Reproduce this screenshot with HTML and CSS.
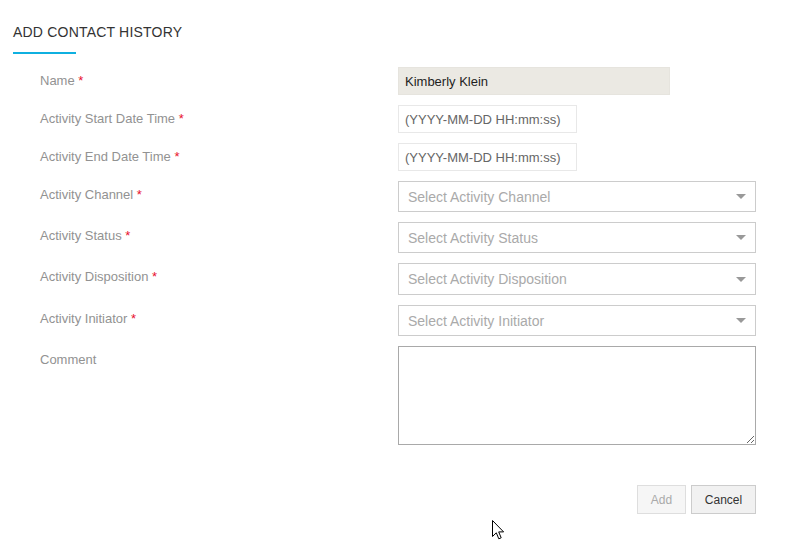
FILE: index.html
```html
<!DOCTYPE html>
<html lang="en">
<head>
<meta charset="utf-8">
<title>Add Contact History</title>
<link rel="stylesheet" href="styles.css">
</head>
<body>
<div class="page">
  <h1 class="title">ADD CONTACT HISTORY</h1>
  <form class="form">
    <div class="row">
      <label class="label">Name <span class="req">*</span></label>
      <div class="field"><input class="input name" type="text" value="Kimberly Klein" readonly></div>
    </div>
    <div class="row">
      <label class="label">Activity Start Date Time <span class="req">*</span></label>
      <div class="field"><input class="input date" type="text" placeholder="(YYYY-MM-DD HH:mm:ss)"></div>
    </div>
    <div class="row">
      <label class="label">Activity End Date Time <span class="req">*</span></label>
      <div class="field"><input class="input date" type="text" placeholder="(YYYY-MM-DD HH:mm:ss)"></div>
    </div>
    <div class="row">
      <label class="label">Activity Channel <span class="req">*</span></label>
      <div class="field"><div class="select"><span>Select Activity Channel</span><i class="caret"></i></div></div>
    </div>
    <div class="row">
      <label class="label">Activity Status <span class="req">*</span></label>
      <div class="field"><div class="select"><span>Select Activity Status</span><i class="caret"></i></div></div>
    </div>
    <div class="row">
      <label class="label">Activity Disposition <span class="req">*</span></label>
      <div class="field"><div class="select tall"><span>Select Activity Disposition</span><i class="caret"></i></div></div>
    </div>
    <div class="row">
      <label class="label">Activity Initiator <span class="req">*</span></label>
      <div class="field"><div class="select"><span>Select Activity Initiator</span><i class="caret"></i></div></div>
    </div>
    <div class="row">
      <label class="label">Comment</label>
      <div class="field"><textarea class="textarea"></textarea></div>
    </div>
    <div class="actions">
      <button type="button" class="btn btn-add" disabled>Add</button>
      <button type="button" class="btn btn-cancel">Cancel</button>
    </div>
  </form>
</div>
<svg class="cursor" width="13" height="21" viewBox="0 0 13 21" aria-hidden="true">
  <path d="M0.5 0.5 L0.5 16.5 L4.3 12.8 L6.8 18.8 L9.2 17.8 L6.7 11.9 L11.6 11.9 Z" fill="#fff" stroke="#000" stroke-width="1" stroke-linejoin="miter"/>
</svg>
</body>
</html>
```
FILE: styles.css
```css
* { box-sizing: border-box; }
html, body {
  margin: 0;
  padding: 0;
  background: #fff;
  font-family: "Liberation Sans", Arial, sans-serif;
}
.page {
  width: 791px;
  height: 546px;
  padding-top: 24px;
  position: relative;
}
.title {
  margin: 0 0 0 13px;
  font-size: 14px;
  line-height: 16px;
  font-weight: normal;
  color: #333;
  letter-spacing: 0.2px;
}
.title::after {
  content: "";
  display: block;
  width: 63px;
  height: 2px;
  margin-top: 12px;
  background: #0fb0e0;
}
.form {
  margin-top: 13px;
  padding-left: 40px;
  display: flex;
  flex-direction: column;
  gap: 10px;
}
.row {
  display: grid;
  grid-template-columns: 358px 358px;
  align-items: start;
}
.label {
  padding-top: 6px;
  font-size: 13px;
  line-height: 15px;
  color: #929292;
}
.req { color: #e8112d; }
.field { display: flex; }
.input {
  font-family: "Liberation Sans", Arial, sans-serif;
  font-size: 13px;
  height: 28px;
  padding: 0 6px;
  margin: 0;
  border: 1px solid #e8e8e8;
  outline: none;
  color: #222;
  background: #fff;
}
.input.name {
  width: 272px;
  height: 28px;
  background: #ebe9e3;
  border-color: #e6e4de;
  color: #1e1e1e;
}
.input.date { width: 179px; }
.input::placeholder { color: #666; opacity: 1; }
.select {
  width: 358px;
  height: 31px;
  border: 1px solid #ccc;
  display: flex;
  align-items: center;
  justify-content: space-between;
  padding: 0 9px;
  font-size: 14px;
  color: #aaa;
}
.select.tall { height: 32px; }
.caret {
  width: 0;
  height: 0;
  border-left: 5px solid transparent;
  border-right: 5px solid transparent;
  border-top: 5px solid #999;
}
.textarea {
  width: 358px;
  height: 99px;
  border: 1px solid #a9a9a9;
  margin: 0;
  padding: 4px;
  font-family: "Liberation Sans", Arial, sans-serif;
  font-size: 13px;
  outline: none;
  resize: both;
}
.actions {
  display: flex;
  justify-content: flex-end;
  gap: 5px;
  width: 716px;
  margin-top: 30px;
}
.btn {
  height: 29px;
  font-family: "Liberation Sans", Arial, sans-serif;
  font-size: 12px;
  font-weight: normal;
  padding: 0;
  margin: 0;
  cursor: default;
}
.btn-add {
  width: 49px;
  background: #f6f6f6;
  border: 1px solid #dedede;
  color: #aaa;
}
.btn-cancel {
  width: 65px;
  background: #f1f1f1;
  border: 1px solid #ccc;
  color: #333;
}
.cursor {
  position: absolute;
  left: 492px;
  top: 520px;
}
```
